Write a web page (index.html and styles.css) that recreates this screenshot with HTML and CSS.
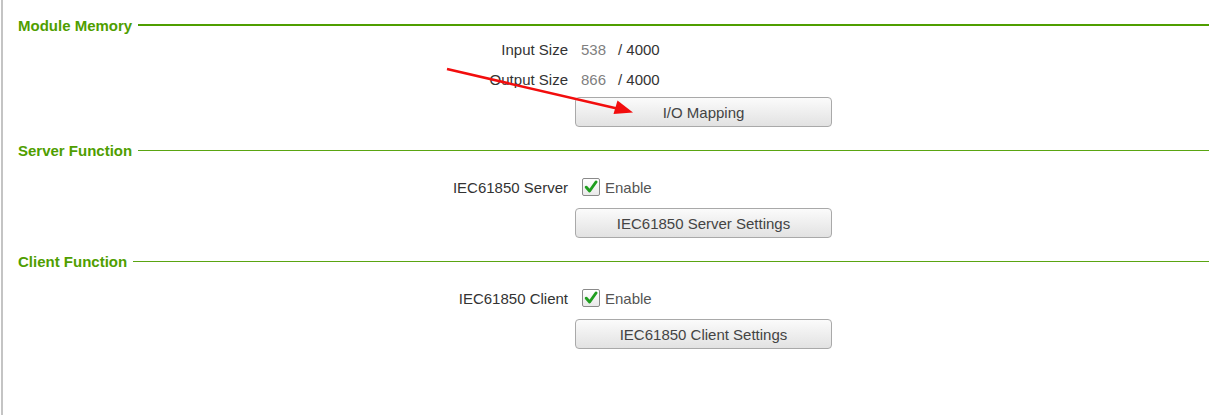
FILE: index.html
```html
<!DOCTYPE html>
<html>
<head>
<meta charset="utf-8">
<link rel="stylesheet" href="styles.css">
</head>
<body>
<div class="page">
  <section class="sec sec-memory">
    <div class="sec-head"><span class="sec-title">Module Memory</span><span class="sec-line thick"></span></div>
    <div class="row row-text">
      <div class="label">Input Size</div>
      <div class="value"><span class="num">538</span><span class="max">/ 4000</span></div>
    </div>
    <div class="row row-text row-second">
      <div class="label">Output Size</div>
      <div class="value"><span class="num">866</span><span class="max">/ 4000</span></div>
    </div>
    <div class="row row-btn">
      <div class="label"></div>
      <div class="value"><button class="btn">I/O Mapping</button></div>
    </div>
  </section>

  <section class="sec">
    <div class="sec-head"><span class="sec-title">Server Function</span><span class="sec-line"></span></div>
    <div class="row row-check">
      <div class="label">IEC61850 Server</div>
      <div class="value"><label class="check"><span class="box"><svg viewBox="0 0 14 14" width="14" height="14"><path d="M2.3 7.2 L5.6 11 L12 2" fill="none" stroke="#1f9e1f" stroke-width="2.9" stroke-linecap="round" stroke-linejoin="round"/></svg></span><span class="check-text">Enable</span></label></div>
    </div>
    <div class="row row-btn">
      <div class="label"></div>
      <div class="value"><button class="btn">IEC61850 Server Settings</button></div>
    </div>
  </section>

  <section class="sec">
    <div class="sec-head"><span class="sec-title">Client Function</span><span class="sec-line"></span></div>
    <div class="row row-check">
      <div class="label">IEC61850 Client</div>
      <div class="value"><label class="check"><span class="box"><svg viewBox="0 0 14 14" width="14" height="14"><path d="M2.3 7.2 L5.6 11 L12 2" fill="none" stroke="#1f9e1f" stroke-width="2.9" stroke-linecap="round" stroke-linejoin="round"/></svg></span><span class="check-text">Enable</span></label></div>
    </div>
    <div class="row row-btn">
      <div class="label"></div>
      <div class="value"><button class="btn">IEC61850 Client Settings</button></div>
    </div>
  </section>

  <svg class="arrow" width="1209" height="415" viewBox="0 0 1209 415">
    <line x1="444" y1="69" x2="614" y2="108.5" stroke="#f20d0d" stroke-width="2.5"/>
    <polygon points="630,112.5 610.5,114 614.5,100.5" fill="#f20d0d"/>
  </svg>
</div>
</body>
</html>
```

FILE: styles.css
```css
html, body {
  margin: 0;
  padding: 0;
  background: #fff;
}
body {
  font-family: "Liberation Sans", Arial, sans-serif;
  font-size: 15px;
  color: #333;
}
.page {
  position: relative;
  margin-left: 1px;
  border-left: 2px solid #c4c4c4;
  height: 415px;
  box-sizing: border-box;
  padding-left: 15px;
  padding-top: 15px;
  overflow: hidden;
}
.sec-head {
  display: flex;
  align-items: center;
  height: 20px;
  gap: 6px;
}
.sec-title {
  font-weight: bold;
  color: #4f9e00;
  white-space: nowrap;
}
.sec-line {
  flex: 1;
  height: 1px;
  background: #5aa512;
}
.sec-line.thick {
  height: 2px;
  background: #4f9e00;
}
.sec {
  margin-bottom: 13px;
}
.row {
  display: grid;
  grid-template-columns: 550px 1fr;
  column-gap: 7px;
  align-items: center;
}
.label {
  text-align: right;
  color: #333;
}
.row-text {
  height: 28px;
}
.row-second {
  margin-top: 2px;
}
.row-check {
  height: 28px;
  margin-top: 13px;
}
.row-btn {
  margin-top: 4px;
}
.sec:not(.sec-memory) .row-btn {
  margin-top: 7px;
}
.value {
  display: flex;
  align-items: center;
}
.num {
  color: #7f7f7f;
  padding-left: 6px;
  width: 37px;
}
.max {
  color: #333;
}
.check {
  display: flex;
  align-items: center;
  padding-left: 7px;
  gap: 5px;
}
.box {
  width: 16px;
  height: 16px;
  border: 1px solid #8a8a8a;
  border-radius: 2px;
  background: linear-gradient(#ffffff, #e9e9e9);
  display: flex;
  align-items: center;
  justify-content: center;
}
.check-text {
  color: #555;
}
.btn {
  width: 257px;
  height: 30px;
  font-family: "Liberation Sans", Arial, sans-serif;
  font-size: 15px;
  color: #444;
  border: 1px solid #a9a9a9;
  border-radius: 4px;
  background: linear-gradient(#fbfbfb, #e2e2e2);
  padding: 0;
}
.arrow {
  position: absolute;
  left: 0;
  top: 0;
  pointer-events: none;
}
```
